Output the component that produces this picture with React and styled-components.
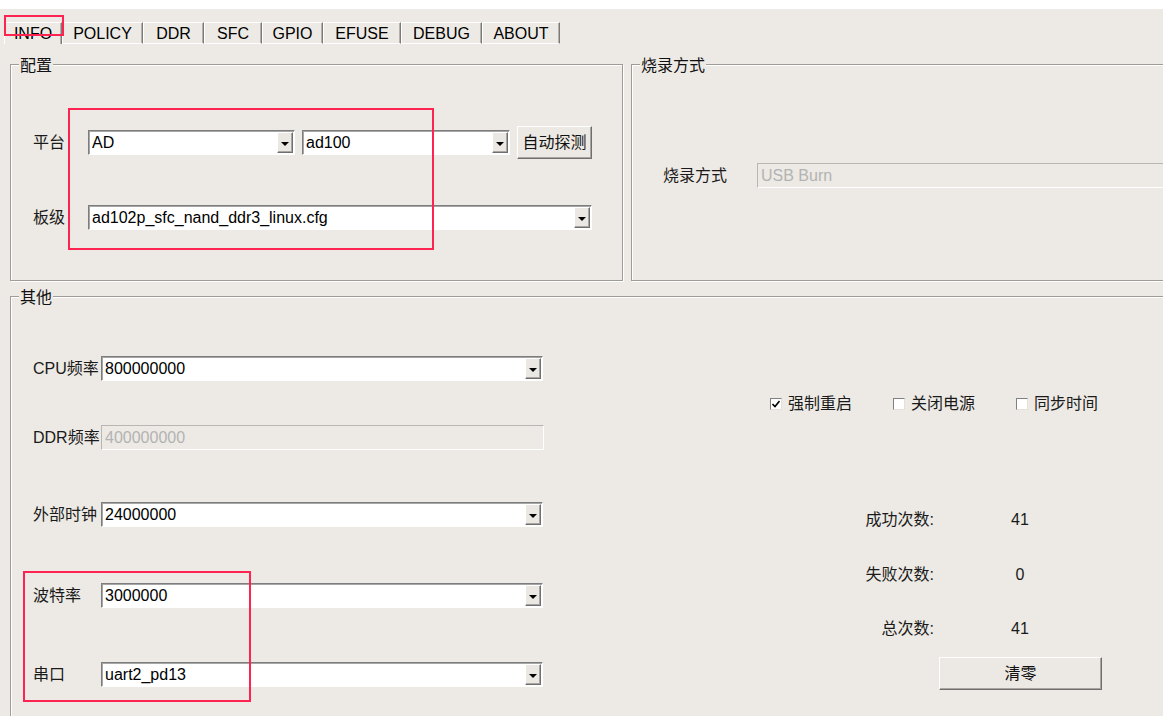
import React from 'react';
import styled, { createGlobalStyle } from 'styled-components';

const Global = createGlobalStyle`
  body {
    margin: 0;
    background: #fff;
    font-family: "Liberation Sans", "Noto Sans CJK SC", sans-serif;
  }
`;

const BG = '#edeae5';

const Root = styled.div`
  position: relative;
  width: 1163px;
  height: 716px;
  overflow: hidden;
  background: #fff;
`;

const Window = styled.div`
  margin-top: 9px;
  height: 707px;
  background: ${BG};
  color: #111;
  font-size: 16px;
  line-height: 18px;
  overflow: hidden;
`;

const TabBar = styled.div`
  display: flex;
  padding: 13px 0 0 4px;
`;

const Tab = styled.div`
  box-sizing: border-box;
  width: ${p => p.$w}px;
  height: 22px;
  line-height: 21px;
  text-align: center;
  border-left: 1px solid #fff;
  border-top: 1px solid #fff;
  border-right: 1px solid #7c7a76;
  border-bottom: ${p => (p.$active ? 'none' : '1px solid #fff')};
  box-shadow: inset -1px 0 0 #b4b1ac;
  color: #000;
`;

const Pane = styled.div`
  padding: 10px 0 0 10px;
`;

const TopRow = styled.div`
  display: flex;
  gap: 8px;
`;

const Group = styled.fieldset`
  box-sizing: border-box;
  margin: ${p => p.$mt || 0}px 0 0;
  padding: 0;
  min-width: 0;
  width: ${p => p.$w}px;
  height: ${p => p.$h}px;
  border: 1px solid #9f9c97;
  box-shadow: inset 1px 1px 0 #fff, 1px 1px 0 #fff;
  flex-shrink: 0;
`;

const Legend = styled.legend`
  margin-left: 8px;
  padding: 4px 1px 0;
  font-size: 16px;
  line-height: 16px;
  background: ${BG};
  color: #111;
`;

const ConfigBody = styled.div`
  display: grid;
  grid-template-columns: 55px auto;
  row-gap: 46px;
  align-items: center;
  padding: 52px 0 0 22px;
`;

const BurnBody = styled.div`
  display: grid;
  grid-template-columns: 94px auto;
  align-items: center;
  padding: 89px 0 0 31px;
`;

const Label = styled.span`
  color: #1a1a1a;
  white-space: nowrap;
`;

const Inline = styled.div`
  display: flex;
  align-items: center;
  gap: 7px;
`;

const ComboBox = styled.div`
  box-sizing: border-box;
  display: flex;
  align-items: center;
  width: ${p => p.$w}px;
  height: 25px;
  background: ${p => (p.$disabled ? BG : '#fff')};
  border: 1px solid;
  border-color: ${p => (p.$disabled ? '#b9b6b1 #fff #fff #b9b6b1' : '#7d7d7d #fff #fff #7d7d7d')};
  box-shadow: ${p => (p.$disabled ? 'none' : 'inset 1px 1px 0 #a6a6a6')};
  padding: 1px 1px 1px 3px;
  color: ${p => (p.$disabled ? '#b3b3b3' : '#000')};
`;

const ComboText = styled.span`
  flex: 1;
  white-space: nowrap;
  overflow: hidden;
`;

const DropButton = styled.span`
  box-sizing: border-box;
  display: flex;
  align-items: center;
  justify-content: center;
  width: 16px;
  height: 21px;
  background: #ebe8e3;
  border: 1px solid;
  border-color: #fff #6f6f6f #6f6f6f #fff;
  box-shadow: inset -1px -1px 0 #a9a6a1;
`;

const Arrow = styled.span`
  width: 0;
  height: 0;
  border-left: 4px solid transparent;
  border-right: 4px solid transparent;
  border-top: 4px solid #000;
  margin-top: 2px;
`;

const PushButton = styled.button`
  box-sizing: border-box;
  width: ${p => p.$w}px;
  height: 33px;
  padding: 0;
  font: inherit;
  font-size: 16px;
  color: #111;
  background: #ece9e4;
  border: 1px solid;
  border-color: #fff #6f6f6f #6f6f6f #fff;
  box-shadow: inset -1px -1px 0 #a9a6a1;
`;

const OtherBody = styled.div`
  display: flex;
  padding-left: 22px;
`;

const LeftCol = styled.div`
  display: flex;
  flex-direction: column;
`;

const FieldRow = styled.div`
  display: grid;
  grid-template-columns: 68px 442px;
  align-items: center;
  margin-top: ${p => p.$mt}px;
`;

const RightCol = styled.div`
  display: flex;
  flex-direction: column;
  margin-left: 227px;
  padding-top: 88px;
`;

const CheckRow = styled.div`
  display: flex;
  height: 20px;
`;

const CheckItem = styled.label`
  display: flex;
  align-items: center;
  gap: 6px;
  width: 123px;
  color: #1a1a1a;
`;

const Box = styled.span`
  box-sizing: border-box;
  display: flex;
  align-items: center;
  justify-content: center;
  width: 12px;
  height: 12px;
  background: #fff;
  border: 1px solid;
  border-color: #808080 #e4e1dc #e4e1dc #808080;
  margin-top: -1px;
`;

const Stats = styled.div`
  display: grid;
  grid-template-columns: 164px 172px;
  grid-auto-rows: 22px;
  row-gap: 32.5px;
  align-items: center;
  margin-top: 95px;
`;

const StatLabel = styled.span`
  justify-self: end;
  color: #1a1a1a;
`;

const StatValue = styled.span`
  justify-self: center;
  color: #1a1a1a;
`;

const ClearRow = styled.div`
  margin: 17px 0 0 169px;
`;

const Mark = styled.div`
  position: absolute;
  left: ${p => p.$x}px;
  top: ${p => p.$y}px;
  width: ${p => p.$w}px;
  height: ${p => p.$h}px;
  box-sizing: border-box;
  border: 2px solid #ff2352;
  pointer-events: none;
`;

const tabs = [
  { name: 'INFO', w: 58 },
  { name: 'POLICY', w: 81 },
  { name: 'DDR', w: 61 },
  { name: 'SFC', w: 58 },
  { name: 'GPIO', w: 61 },
  { name: 'EFUSE', w: 78 },
  { name: 'DEBUG', w: 81 },
  { name: 'ABOUT', w: 78 },
];

const fields = [
  { label: 'CPU频率', value: '800000000', mt: 50 },
  { label: 'DDR频率', value: '400000000', mt: 44, disabled: true },
  { label: '外部时钟', value: '24000000', mt: 52 },
  { label: '波特率', value: '3000000', mt: 56 },
  { label: '串口', value: 'uart2_pd13', mt: 54 },
];

const checks = [
  { label: '强制重启', on: true },
  { label: '关闭电源', on: false },
  { label: '同步时间', on: false },
];

const stats = [
  { label: '成功次数:', value: '41' },
  { label: '失败次数:', value: '0' },
  { label: '总次数:', value: '41' },
];

const Combo = ({ w, value, disabled }) => (
  <ComboBox $w={w} $disabled={disabled}>
    <ComboText>{value}</ComboText>
    {!disabled && (
      <DropButton>
        <Arrow />
      </DropButton>
    )}
  </ComboBox>
);

const Check = ({ on }) => (
  <Box>
    {on && (
      <svg width="8" height="8" viewBox="0 0 8 8">
        <polyline points="0.5,4 3,6.5 7.5,1" fill="none" stroke="#000" strokeWidth="1.6" />
      </svg>
    )}
  </Box>
);

export default function App() {
  return (
    <Root>
      <Global />
      <Window>
        <TabBar>
          {tabs.map((t, i) => (
            <Tab key={t.name} $w={t.w} $active={i === 0}>
              {t.name}
            </Tab>
          ))}
        </TabBar>
        <Pane>
          <TopRow>
            <Group $w={613} $h={227}>
              <Legend>配置</Legend>
              <ConfigBody>
                <Label>平台</Label>
                <Inline>
                  <Combo w={207} value="AD" />
                  <Combo w={208} value="ad100" />
                  <PushButton $w={75}>自动探测</PushButton>
                </Inline>
                <Label>板级</Label>
                <Combo w={504} value="ad102p_sfc_nand_ddr3_linux.cfg" />
              </ConfigBody>
            </Group>
            <Group $w={600} $h={227}>
              <Legend>烧录方式</Legend>
              <BurnBody>
                <Label>烧录方式</Label>
                <Combo w={500} value="USB Burn" disabled />
              </BurnBody>
            </Group>
          </TopRow>
          <Group $w={1200} $h={500} $mt={5}>
            <Legend>其他</Legend>
            <OtherBody>
              <LeftCol>
                {fields.map(f => (
                  <FieldRow key={f.label} $mt={f.mt}>
                    <Label>{f.label}</Label>
                    <Combo w={f.disabled ? 443 : 442} value={f.value} disabled={f.disabled} />
                  </FieldRow>
                ))}
              </LeftCol>
              <RightCol>
                <CheckRow>
                  {checks.map(c => (
                    <CheckItem key={c.label}>
                      <Check on={c.on} />
                      {c.label}
                    </CheckItem>
                  ))}
                </CheckRow>
                <Stats>
                  {stats.map(s => (
                    <React.Fragment key={s.label}>
                      <StatLabel>{s.label}</StatLabel>
                      <StatValue>{s.value}</StatValue>
                    </React.Fragment>
                  ))}
                </Stats>
                <ClearRow>
                  <PushButton $w={163}>清零</PushButton>
                </ClearRow>
              </RightCol>
            </OtherBody>
          </Group>
        </Pane>
      </Window>
      <Mark $x={4} $y={15} $w={60} $h={21} />
      <Mark $x={68} $y={108} $w={366} $h={142} />
      <Mark $x={23} $y={571} $w={228} $h={131} />
    </Root>
  );
}
